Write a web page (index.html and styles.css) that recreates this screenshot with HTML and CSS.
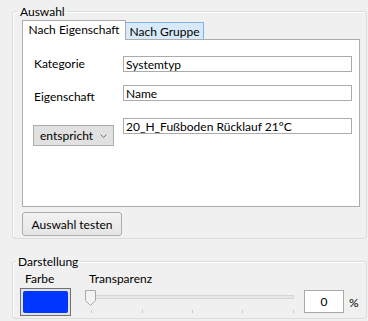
FILE: index.html
```html
<!DOCTYPE html>
<html lang="de">
<head>
    <meta charset="UTF-8">
    <title>Auswahl</title>
    <link rel="stylesheet" href="styles.css">
</head>
<body>
    <fieldset class="group group-select">
        <legend>Auswahl</legend>

        <div class="tabs">
            <span class="tab tab-active">Nach Eigenschaft</span>
            <span class="tab tab-hover">Nach Gruppe</span>
        </div>

        <div class="tab-panel">
            <div class="row">
                <label class="lbl">Kategorie</label>
                <input class="field" type="text" value="Systemtyp" readonly>
            </div>
            <div class="row">
                <label class="lbl lbl-low">Eigenschaft</label>
                <input class="field" type="text" value="Name" readonly>
            </div>
            <div class="row">
                <div class="combo">
                    <span>entspricht</span>
                    <svg class="combo-arrow" width="7" height="4" viewBox="0 0 7 4">
                        <polyline points="0.5,0.5 3.5,3.5 6.5,0.5" fill="none" stroke="#707070" stroke-width="1"/>
                    </svg>
                </div>
                <input class="field" type="text" value="20_H_Fußboden Rücklauf 21°C" readonly>
            </div>
        </div>

        <button class="btn">Auswahl testen</button>
    </fieldset>

    <fieldset class="group group-view">
        <legend>Darstellung</legend>

        <div class="view-body">
            <div class="col col-color">
                <span class="col-label">Farbe</span>
                <div class="swatch"><div class="swatch-fill"></div></div>
            </div>
            <div class="col col-slider">
                <span class="col-label">Transparenz</span>
                <svg class="slider" width="212" height="27" viewBox="0 0 212 27">
                    <rect x="1.5" y="7.5" width="208" height="3" fill="#e7e7e7" stroke="#d6d6d6"/>
                    <g stroke="#c9c9c9">
                        <line x1="7.5" y1="22" x2="7.5" y2="25"/>
                        <line x1="58.5" y1="22" x2="58.5" y2="25"/>
                        <line x1="108.5" y1="22" x2="108.5" y2="25"/>
                        <line x1="158.5" y1="22" x2="158.5" y2="25"/>
                        <line x1="209.5" y1="22" x2="209.5" y2="25"/>
                    </g>
                    <polygon points="1.5,2.5 11.5,2.5 11.5,12.5 6.5,17.5 1.5,12.5" fill="#f3f3f3" stroke="#a8a8a8"/>
                </svg>
            </div>
            <input class="percent" type="text" value="0" readonly>
            <span class="unit">%</span>
        </div>
    </fieldset>
</body>
</html>
```

FILE: styles.css
```css
body {
    margin: 0;
    padding: 4px 1px 0 12px;
    background-color: #f0f0f0;
    font-family: "Segoe UI", Lato, "Noto Sans", sans-serif;
    font-size: 12px;
    color: #000;
}

.group {
    margin: 0;
    border: 1px solid #dcdcdc;
    border-radius: 3px;
    box-shadow: inset 1px 1px 0 #fff;
    min-width: 0;
}

.group legend {
    margin-left: -4px;
    padding: 0 2px;
    line-height: 15px;
}

.group-select {
    padding: 1px 6px 2px 9px;
}

.group-view {
    margin-top: 15px;
    padding: 2px 6px 2px 7px;
}

/* tabs */

.tabs {
    display: flex;
    align-items: flex-end;
    height: 19px;
}

.tab {
    box-sizing: border-box;
    display: block;
    text-align: center;
    border: 1px solid #adadad;
    border-bottom: none;
    white-space: nowrap;
}

.tab-active {
    position: relative;
    width: 104px;
    height: 20px;
    margin-bottom: -1px;
    line-height: 18px;
    background-color: #fff;
}

.tab-hover {
    width: 79px;
    height: 17px;
    margin-left: -1px;
    line-height: 17px;
    background-color: #d8eaf9;
    border-color: #7eb4ea;
}

.tab-panel {
    box-sizing: border-box;
    height: 168px;
    padding: 16px 7px 0 11px;
    background-color: #fff;
    border: 1px solid #adadad;
}

.row {
    display: flex;
    align-items: flex-start;
    margin-bottom: 13px;
}

.lbl {
    width: 89px;
    line-height: 16px;
}

.lbl-low {
    margin-top: 4px;
}

.field {
    box-sizing: border-box;
    flex: 1;
    min-width: 0;
    height: 16px;
    margin: 0;
    padding: 0 2px;
    border: 1px solid #ababab;
    font: inherit;
    line-height: 14px;
    color: #000;
    outline: none;
}

.combo {
    box-sizing: border-box;
    display: flex;
    align-items: center;
    justify-content: space-between;
    width: 81px;
    height: 21px;
    margin: 7px 9px 0 -1px;
    padding: 0 6px 0 6px;
    background-color: #e1e1e1;
    border: 1px solid #adadad;
}

.combo-arrow {
    margin-top: 1px;
}

.btn {
    box-sizing: border-box;
    display: block;
    width: 100px;
    height: 24px;
    margin-top: 5px;
    padding: 0;
    border: 1px solid #adadad;
    border-radius: 3px;
    background: linear-gradient(#f2f2f2, #e5e5e5);
    font: inherit;
    color: #000;
}

/* darstellung */

.view-body {
    display: flex;
    align-items: flex-start;
}

.col {
    display: flex;
    flex-direction: column;
}

.col-label {
    line-height: 15px;
    margin: 0 0 2px 5px;
}

.col-color {
    width: 51px;
    margin-right: 13px;
}

.swatch {
    box-sizing: border-box;
    width: 51px;
    height: 28px;
    padding: 2px;
    border: 1px solid #707070;
    background-color: #e3e3e3;
}

.swatch-fill {
    height: 100%;
    border-radius: 2px;
    background-color: #0036ff;
}

.col-slider {
    width: 212px;
}

.slider {
    display: block;
}

.percent {
    box-sizing: border-box;
    width: 40px;
    height: 23px;
    margin: 19px 0 0 8px;
    padding: 0;
    border: 1px solid #a8a8a8;
    font: inherit;
    text-align: center;
    color: #000;
    outline: none;
}

.unit {
    margin: 24px 0 0 5px;
    line-height: 15px;
}
```
